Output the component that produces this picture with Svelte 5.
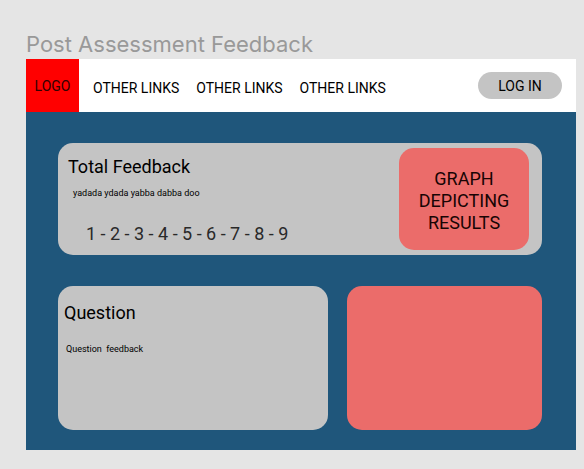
<script>
  const links = ['OTHER LINKS', 'OTHER LINKS', 'OTHER LINKS'];
  const scores = [1, 2, 3, 4, 5, 6, 7, 8, 9];
</script>

<div class="canvas">
  <h1>Post Assessment Feedback</h1>
  <div class="frame">
    <header>
      <a class="logo" href="#home">LOGO</a>
      <nav>
        {#each links as link}
          <a href="#other">{link}</a>
        {/each}
      </nav>
      <button type="button">LOG IN</button>
    </header>
    <main>
      <section class="panel total">
        <div class="summary">
          <h2>Total Feedback</h2>
          <p>yadada ydada yabba dabba doo</p>
          <div class="scores">{scores.join(' - ')}</div>
        </div>
        <div class="graph">GRAPH DEPICTING RESULTS</div>
      </section>
      <div class="row">
        <section class="panel question">
          <h2>Question</h2>
          <p>Question&nbsp; feedback</p>
        </section>
        <div class="chart"></div>
      </div>
    </main>
  </div>
</div>

<style>
  :global(body) {
    margin: 0;
    background: #e5e5e5;
  }
  .canvas {
    padding: 29px 8px 19px 26px;
    font-family: Roboto, "Liberation Sans", sans-serif;
    color: #000;
  }
  h1,
  h2,
  p {
    margin: 0;
    font-weight: 400;
  }
  h1 {
    font-family: Inter, sans-serif;
    font-size: 22px;
    line-height: 30px;
    color: #999;
    white-space: nowrap;
  }
  header {
    display: flex;
    align-items: center;
    min-height: 53px;
    padding-right: 14px;
    background: #fff;
    font-size: 14px;
    line-height: 16px;
  }
  header a {
    color: inherit;
    text-decoration: none;
  }
  .logo {
    display: flex;
    align-items: center;
    justify-content: center;
    width: 53px;
    height: 53px;
    background: #f00;
  }
  header .logo {
    color: #300;
  }
  nav {
    display: flex;
    gap: 17px;
    flex: 1;
    padding: 4px 0 0 14px;
    white-space: nowrap;
  }
  button {
    width: 84px;
    height: 27px;
    padding: 0;
    border: 0;
    border-radius: 14px;
    background: #c4c4c4;
    color: #000;
    font: inherit;
  }
  main {
    display: flex;
    flex-direction: column;
    gap: 31px;
    padding: 31px 34px 20px 32px;
    background: #1f567b;
  }
  .panel {
    box-sizing: border-box;
    border-radius: 15px;
    background: #c4c4c4;
  }
  h2 {
    font-size: 18px;
    line-height: 22px;
  }
  p {
    font-size: 9px;
    line-height: 12px;
  }
  .total {
    display: flex;
    justify-content: space-between;
    min-height: 112px;
    padding: 5px 13px 5px 10px;
  }
  .summary {
    padding-top: 8px;
  }
  .summary p {
    padding: 9px 0 0 5px;
  }
  .scores {
    padding: 24px 0 0 18px;
    font-size: 18px;
    line-height: 22px;
    color: #292929;
  }
  .graph {
    display: flex;
    align-items: center;
    box-sizing: border-box;
    width: 130px;
    padding: 4px 16px 0;
    border-radius: 15px;
    background: #eb6c6a;
    color: #180404;
    font-size: 18px;
    line-height: 22px;
    text-align: center;
  }
  .row {
    display: grid;
    grid-template-columns: 271fr 195fr;
    gap: 19px;
    min-height: 144px;
  }
  .question {
    padding: 16px 6px;
  }
  .question p {
    padding: 19px 0 0 2px;
  }
  .chart {
    border-radius: 15px;
    background: #eb6c6a;
  }
</style>
